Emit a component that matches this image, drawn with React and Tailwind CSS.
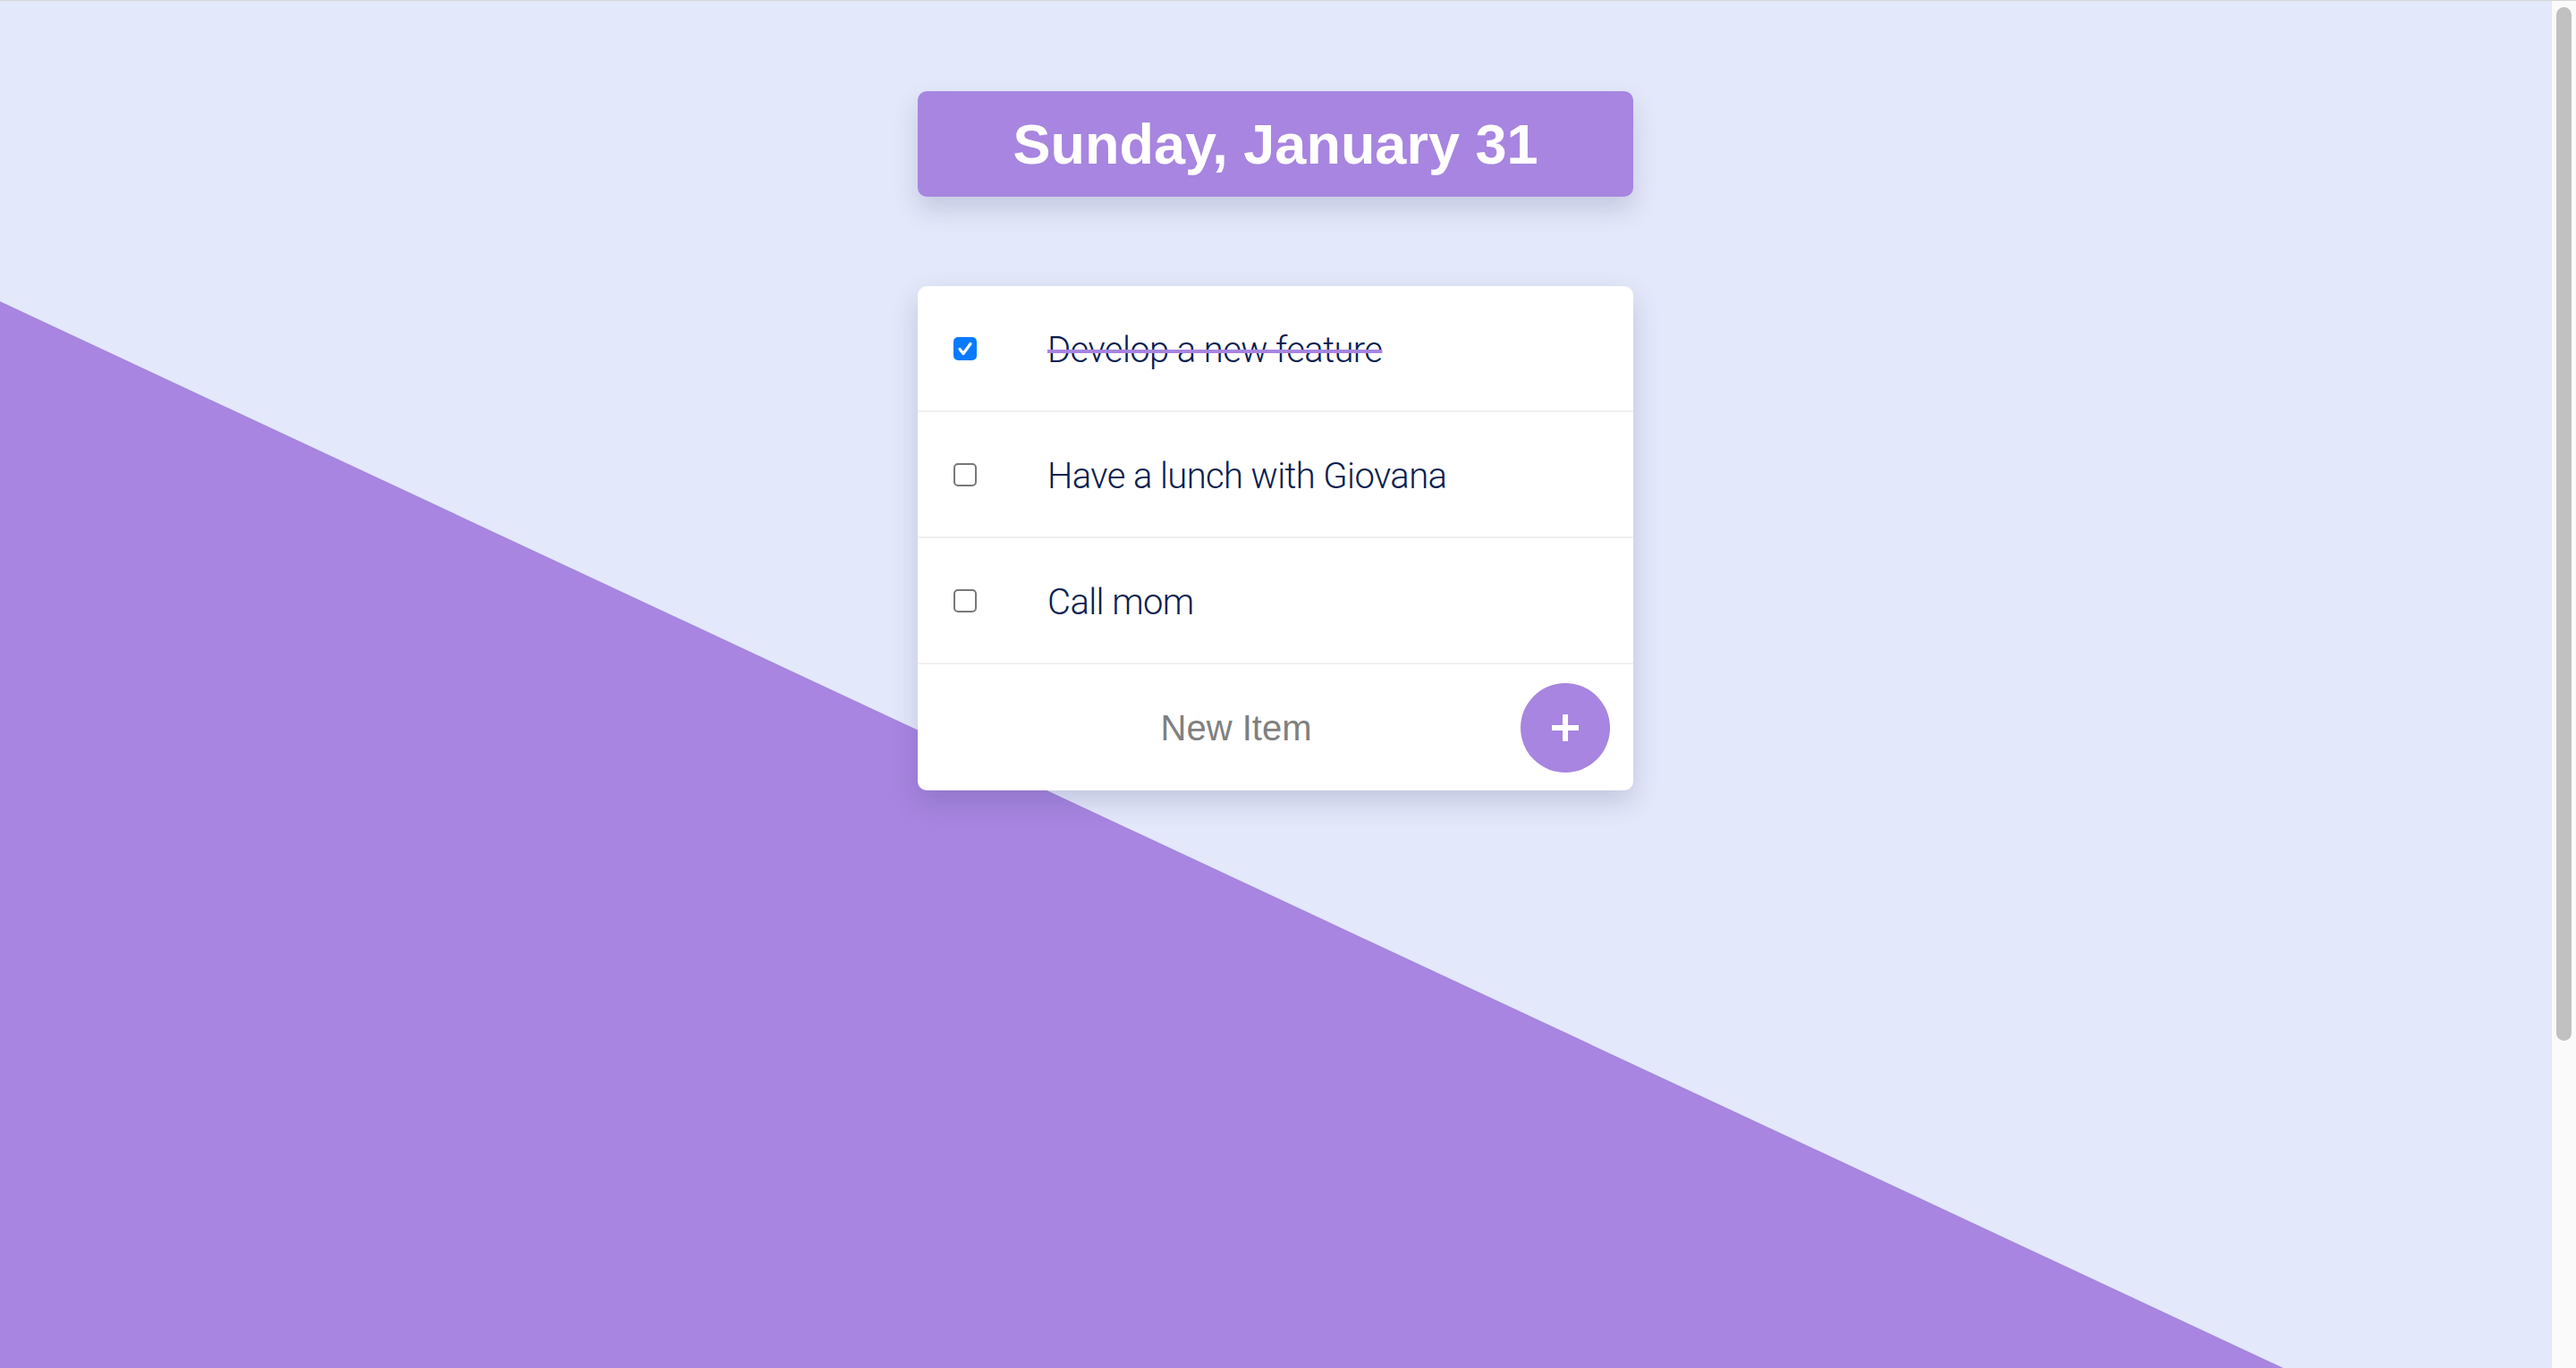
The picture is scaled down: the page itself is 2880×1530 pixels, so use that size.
import React, { useState } from 'react';

const INITIAL_ITEMS = [
  { id: 1, text: 'Develop a new feature', done: true },
  { id: 2, text: 'Have a lunch with Giovana', done: false },
  { id: 3, text: 'Call mom', done: false },
];

function Checkbox({ checked, onChange }) {
  return (
    <label className="relative flex h-[26px] w-[26px] shrink-0 cursor-pointer">
      <input
        type="checkbox"
        checked={checked}
        onChange={onChange}
        className="m-0 h-[26px] w-[26px] cursor-pointer appearance-none rounded-[5px] border-2 border-[#787878] bg-white checked:border-[#0a7aff] checked:bg-[#0a7aff]"
      />
      {checked && (
        <svg className="pointer-events-none absolute inset-0" viewBox="0 0 26 26">
          <path d="M7 13.5l4 5 8-11" fill="none" stroke="white" strokeWidth="3.2" strokeLinecap="round" strokeLinejoin="round" />
        </svg>
      )}
    </label>
  );
}

function TodoRow({ item, onToggle }) {
  return (
    <li className="flex h-[141px] items-center border-b-2 border-[#f0f0f2] pl-[40px]">
      <Checkbox checked={item.done} onChange={() => onToggle(item.id)} />
      <span
        className={
          'ml-[79px] mt-[5px] font-["Roboto","Liberation_Sans",sans-serif] text-[40px] font-light tracking-[-0.6px] text-[#082050] ' +
          (item.done ? 'line-through decoration-[#a785e0] decoration-[4px]' : '')
        }
      >
        {item.text}
      </span>
    </li>
  );
}

export default function App() {
  const [items, setItems] = useState(INITIAL_ITEMS);
  const [draft, setDraft] = useState('');

  const toggle = (id) =>
    setItems((prev) => prev.map((it) => (it.id === id ? { ...it, done: !it.done } : it)));

  const add = () => {
    if (!draft.trim()) return;
    setItems((prev) => [...prev, { id: Date.now(), text: draft.trim(), done: false }]);
    setDraft('');
  };

  return (
    <div className="flex h-[1530px] overflow-hidden border-t border-[#d6d6d6] font-['Liberation_Sans',Arial,sans-serif]">
      <main className="relative flex-1 bg-[#e3e8fa]">
        <div
          aria-hidden
          className="pointer-events-none absolute inset-0 bg-[#a785e0] [clip-path:polygon(0_336px,2555px_1530px,0_1530px)]"
        />

        <div className="relative flex flex-col items-center pt-[101px]">
          <header className="flex h-[118px] w-[800px] items-center justify-center rounded-[10px] bg-[#a785e0] shadow-[0_14px_28px_rgba(60,60,110,0.18)]">
            <h1 className="text-[63px] font-bold leading-none text-white">Sunday, January 31</h1>
          </header>

          <section className="mt-[100px] w-[800px] overflow-hidden rounded-[10px] bg-white shadow-[0_12px_30px_rgba(60,60,110,0.2)]">
            <ul>
              {items.map((item) => (
                <TodoRow key={item.id} item={item} onToggle={toggle} />
              ))}
            </ul>
            <div className="flex h-[141px] items-center pr-[26px]">
              <input
                value={draft}
                onChange={(e) => setDraft(e.target.value)}
                onKeyDown={(e) => e.key === 'Enter' && add()}
                placeholder="New Item"
                className="min-w-0 flex-1 bg-transparent pl-[38px] text-center text-[40px] text-[#333] outline-none placeholder:text-[#808080]"
              />
              <button
                type="button"
                onClick={add}
                className="flex h-[100px] w-[100px] shrink-0 items-center justify-center rounded-full bg-[#a785e0]"
              >
                <svg width="32" height="32" viewBox="0 0 32 32">
                  <path d="M16 1v30M1 16h30" stroke="white" strokeWidth="6" />
                </svg>
              </button>
            </div>
          </section>
        </div>
      </main>

      {/* page scrollbar */}
      <aside className="flex w-[28px] shrink-0 flex-col border-l border-[#e8e8e8] bg-[#fafafa] px-[5px] pt-[7px]">
        <div className="h-[1156px] w-full rounded-full bg-[#c1c1c1]" />
      </aside>
    </div>
  );
}
